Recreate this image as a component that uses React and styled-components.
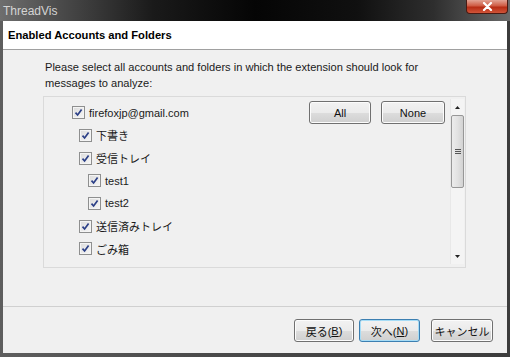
import styled, { createGlobalStyle } from "styled-components";

const Global = createGlobalStyle`
  html, body {
    margin: 0;
    padding: 0;
    background: #3a3a3a;
  }
  body {
    font-family: "Liberation Sans", "Noto Sans CJK JP", sans-serif;
    font-size: 11px;
    color: #000;
  }
`;

const folders = [
  { name: "下書き", level: 1 },
  { name: "受信トレイ", level: 1 },
  { name: "test1", level: 2 },
  { name: "test2", level: 2 },
  { name: "送信済みトレイ", level: 1 },
  { name: "ごみ箱", level: 1 },
];

function Check() {
  return (
    <Box>
      <svg width="9" height="9" viewBox="0 0 9 9">
        <path d="M1.5 4.6 L3.6 7 L7.6 1.4" fill="none" stroke="#2b3f87" strokeWidth="1.7" />
      </svg>
    </Box>
  );
}

export default function App() {
  return (
    <Frame>
      <Global />
      <TitleBar>
        <Title>ThreadVis</Title>
        <CloseBtn>
          <svg width="11" height="9" viewBox="0 0 11 9">
            <path d="M2 1 L9 8 M9 1 L2 8" stroke="#fff" strokeWidth="2.2" strokeLinecap="round" />
          </svg>
        </CloseBtn>
      </TitleBar>
      <Client>
        <Header>Enabled Accounts and Folders</Header>
        <Body>
          <Desc>
            Please select all accounts and folders in which the extension should look for
            <br />
            messages to analyze:
          </Desc>
          <Panel>
            <Tree>
              <AccountRow>
                <Item $level={0}>
                  <Check />
                  <span>firefoxjp@gmail.com</span>
                </Item>
                <Buttons>
                  <Button $w={62}>All</Button>
                  <Button $w={64}>None</Button>
                </Buttons>
              </AccountRow>
              {folders.map((f) => (
                <Row key={f.name}>
                  <Item $level={f.level}>
                    <Check />
                    <span>{f.name}</span>
                  </Item>
                </Row>
              ))}
            </Tree>
            <ScrollBar>
              <Arrow>
                <svg width="5" height="3" viewBox="0 0 5 3"><path d="M0 3 L2.5 0 L5 3 Z" fill="#222" /></svg>
              </Arrow>
              <Thumb>
                <svg width="6" height="5" viewBox="0 0 6 5">
                  <path d="M0 0.5 H6 M0 2.5 H6 M0 4.5 H6" stroke="#555" strokeWidth="1" />
                </svg>
              </Thumb>
              <Track />
              <Arrow>
                <svg width="5" height="3" viewBox="0 0 5 3"><path d="M0 0 L2.5 3 L5 0 Z" fill="#222" /></svg>
              </Arrow>
            </ScrollBar>
          </Panel>
        </Body>
        <Footer>
          <Button $w={60}>
            戻る(<u>B</u>)
          </Button>
          <Button $w={61} $default>
            次へ(<u>N</u>)
          </Button>
          <Button $w={62} $gap={6}>キャンセル</Button>
        </Footer>
      </Client>
    </Frame>
  );
}

const Frame = styled.div`
  width: 510px;
  height: 357px;
  display: flex;
  flex-direction: column;
  background: linear-gradient(to right, #5e5e5e 0%, #4a4a4a 40%, #3c3c3c 100%);
  overflow: hidden;
`;

const TitleBar = styled.div`
  height: 21px;
  display: flex;
  justify-content: space-between;
  align-items: flex-start;
  background: linear-gradient(
    to right,
    #6e6e6e 0%,
    #4a4a4a 12%,
    #1a1a1a 30%,
    #050505 50%,
    #101010 70%,
    #2e2e2e 85%,
    #6a6a6a 100%
  );
`;

const Title = styled.div`
  padding: 4px 0 0 3px;
  font-size: 12px;
  color: #d4d4d4;
  line-height: 14px;
`;

const CloseBtn = styled.div`
  width: 42px;
  height: 14px;
  margin-right: 2px;
  box-sizing: border-box;
  border: 1px solid #4a1a12;
  border-top: none;
  border-radius: 0 0 4px 4px;
  background: linear-gradient(#e2a394 0%, #cf5b43 45%, #b72c14 55%, #d0553a 100%);
  display: flex;
  align-items: center;
  justify-content: center;
`;

const Client = styled.div`
  flex: 1;
  margin: 0 3px 4px 3px;
  display: flex;
  flex-direction: column;
  background: #f0f0f0;
`;

const Header = styled.div`
  height: 29px;
  box-sizing: border-box;
  background: #fff;
  border-bottom: 1px solid #a0a0a0;
  padding: 7px 0 0 5px;
  font-weight: bold;
  font-size: 11.2px;
  line-height: 14px;
`;

const Body = styled.div`
  height: 256px;
  box-sizing: border-box;
  padding: 9px 41px 0 40px;
  display: flex;
  flex-direction: column;
`;

const Desc = styled.div`
  padding-left: 2px;
  line-height: 16px;
  font-size: 11.1px;
  color: #1a1a1a;
`;

const Panel = styled.div`
  margin-top: 5px;
  height: 172px;
  box-sizing: border-box;
  border: 1px solid #dadada;
  display: flex;
`;

const Tree = styled.div`
  flex: 1;
  padding: 4px 5px 0 28px;
  display: flex;
  flex-direction: column;
`;

const Row = styled.div`
  height: 22.7px;
  display: flex;
  align-items: center;
`;

const AccountRow = styled(Row)`
  height: 23px;
  justify-content: space-between;
`;

const Item = styled.div`
  display: flex;
  align-items: center;
  gap: 4px;
  margin-left: ${(p) => (p.$level === 0 ? 0 : p.$level === 1 ? 7 : 16)}px;
  color: #1a1a1a;
  white-space: nowrap;
`;

const Box = styled.div`
  width: 13px;
  height: 13px;
  box-sizing: border-box;
  border: 1px solid #8e8f8f;
  background: linear-gradient(135deg, #dcdcdc 0%, #f6f6f6 100%);
  box-shadow: inset 0 0 0 1px #f4f4f4;
  display: flex;
  align-items: center;
  justify-content: center;
`;

const Buttons = styled.div`
  display: flex;
  gap: 10px;
`;

const Button = styled.div`
  width: ${(p) => p.$w}px;
  height: 23px;
  box-sizing: border-box;
  margin-left: ${(p) => p.$gap || 0}px;
  border: 1px solid ${(p) => (p.$default ? "#3c7fb1" : "#707070")};
  border-radius: 3px;
  background: linear-gradient(#f2f2f2 0%, #ebebeb 50%, #dddddd 51%, #cfcfcf 100%);
  box-shadow: inset 0 0 0 1px ${(p) => (p.$default ? "#a6dcf6" : "#fcfcfc")};
  display: flex;
  align-items: center;
  justify-content: center;
  font-size: 11px;
  color: #111;
  u {
    text-decoration: underline;
  }
`;

const ScrollBar = styled.div`
  width: 13px;
  margin: 2px 1px 3px 0;
  display: flex;
  flex-direction: column;
  background: #f4f4f4;
  border-left: 1px solid #e8e8e8;
`;

const Arrow = styled.div`
  height: 16px;
  display: flex;
  align-items: center;
  justify-content: center;
`;

const Thumb = styled.div`
  height: 73px;
  box-sizing: border-box;
  border: 1px solid #979797;
  border-radius: 2px;
  background: linear-gradient(to right, #ececec 0%, #e2e2e2 50%, #d3d3d3 100%);
  display: flex;
  align-items: center;
  justify-content: center;
`;

const Track = styled.div`
  flex: 1;
`;

const Footer = styled.div`
  flex: 1;
  border-top: 1px solid #d0d0d0;
  padding: 12px 14px 0 0;
  display: flex;
  justify-content: flex-end;
  align-items: flex-start;
  gap: 5px;
`;
